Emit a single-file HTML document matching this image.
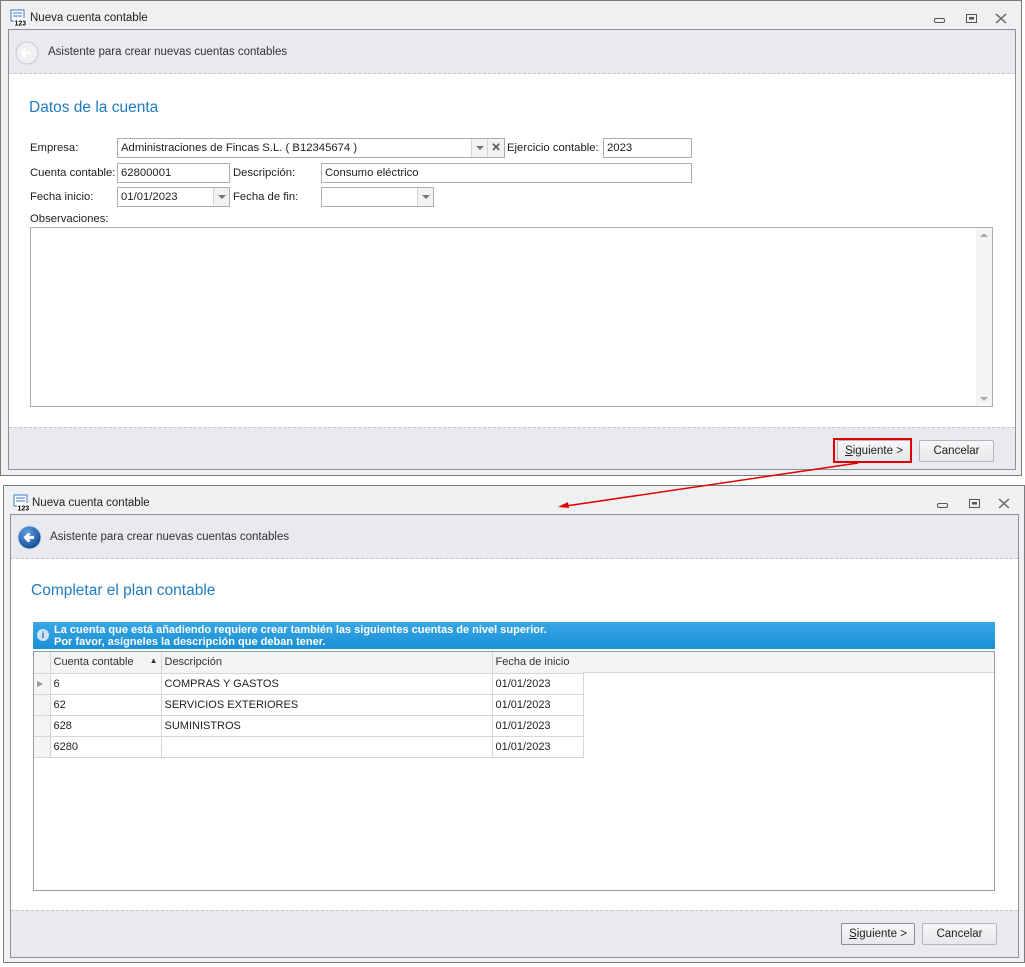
<!DOCTYPE html>
<html><head><meta charset="utf-8"><style>
*{margin:0;padding:0;box-sizing:border-box}
body{width:1025px;height:967px;background:#fff;font-family:"Liberation Sans",sans-serif;font-size:11.3px;color:#1e1e1e;position:relative;overflow:hidden}
.a{position:absolute}
.win{position:absolute;border:1px solid #7a7d80;background:#eef0f2}
.frame{position:absolute;border:1px solid #8d9094;background:#fff}
.hdr{position:absolute;left:0;right:0;top:0;height:44px;background:#e8eaee;border-bottom:1px dashed #c4c7cc}
.ftr{position:absolute;left:0;right:0;bottom:0;height:42px;background:#e8eaee;border-top:1px dashed #c4c7cc}
.inp{position:absolute;height:20px;border:1px solid #abadb3;background:#fff;padding:3px 3px;white-space:nowrap;overflow:hidden}
.dd{position:absolute;top:0;right:0;width:16px;height:18px;border-left:1px solid #d5d5d5;background:#f2f2f2}
.dd:after{content:"";position:absolute;left:4px;top:7px;border:4px solid transparent;border-top:4px solid #777;border-bottom:0}
.btn{position:absolute;height:22px;border:1px solid #b3b6ba;border-radius:2px;background:linear-gradient(#f6f7f8,#e5e7ea);text-align:center;line-height:20px;font-size:11.5px}
.t{position:absolute;white-space:nowrap}
table{border-collapse:collapse}
td{border:1px solid #d6d6d6;height:21px;padding:0 3px;font-size:11px}
</style></head><body>

<!-- Window 1 -->
<div class="win" style="left:0;top:0;width:1022px;height:476px">
 <svg class="a" style="left:9px;top:8px" width="17" height="17"><rect x="1" y="1" width="13" height="11" fill="#fff" stroke="#3b78c9"/><path d="M3 4h9M3 7h9" stroke="#3b78c9"/><rect x="4" y="9" width="13" height="8" fill="#fff"/><text x="4.5" y="16.5" font-size="7" font-family="Liberation Sans" font-weight="bold">123</text></svg>
 <div class="t" style="left:29px;top:11px;font-size:11.5px">Nueva cuenta contable</div>
 <svg class="a" style="left:932px;top:12px" width="80" height="12"><rect x="1.5" y="5.5" width="10" height="4" rx="1.5" fill="none" stroke="#555"/><rect x="33.5" y="1.5" width="10" height="8" fill="none" stroke="#555"/><rect x="36" y="4" width="5" height="2.5" fill="#555"/><path d="M63 1l10 9M73 1l-10 9" stroke="#666" stroke-width="1.5"/></svg>
 <div class="frame" style="left:7px;top:28px;width:1008px;height:441px">
  <div class="hdr">
   <svg class="a" style="left:6px;top:11px" width="24" height="24"><circle cx="12" cy="12" r="11" fill="#eef0f2" stroke="#c6c9cd"/><path d="M16 12H8M11 8l-4 4 4 4" stroke="#fff" stroke-width="3" fill="none"/></svg>
   <div class="t" style="left:39px;top:16px;font-size:11.5px;color:#333">Asistente para crear nuevas cuentas contables</div>
  </div>
  <div class="t" style="left:20px;top:69px;font-size:15.5px;color:#1f7cc1">Datos de la cuenta</div>
  <div class="t" style="left:21px;top:112px">Empresa:</div>
  <div class="inp" style="left:108px;top:108px;width:388px">Administraciones de Fincas S.L. ( B12345674 )<div class="dd" style="right:17px"></div><div class="a" style="right:0;top:0;width:17px;height:18px;background:#f2f2f2;border-left:1px solid #d5d5d5;text-align:center;font-weight:bold;color:#555;line-height:18px">✕</div></div>
  <div class="t" style="left:498px;top:112px">Ejercicio contable:</div>
  <div class="inp" style="left:594px;top:108px;width:89px">2023</div>
  <div class="t" style="left:21px;top:137px">Cuenta contable:</div>
  <div class="inp" style="left:108px;top:133px;width:113px">62800001</div>
  <div class="t" style="left:224px;top:137px">Descripción:</div>
  <div class="inp" style="left:312px;top:133px;width:371px">Consumo eléctrico</div>
  <div class="t" style="left:21px;top:161px">Fecha inicio:</div>
  <div class="inp" style="left:108px;top:157px;width:113px">01/01/2023<div class="dd"></div></div>
  <div class="t" style="left:224px;top:161px">Fecha de fin:</div>
  <div class="inp" style="left:312px;top:157px;width:113px"><div class="dd"></div></div>
  <div class="t" style="left:21px;top:183px">Observaciones:</div>
  <div class="inp" style="left:21px;top:197px;width:963px;height:180px"><div class="a" style="right:0;top:0;width:16px;height:178px;background:#f4f4f4"><div class="a" style="left:4px;top:5px;border:4px solid transparent;border-bottom:4px solid #aaa;border-top:0"></div><div class="a" style="left:4px;bottom:5px;border:4px solid transparent;border-top:4px solid #aaa;border-bottom:0"></div></div></div>
  <div class="ftr">
   <div class="btn" style="left:828px;top:12px;width:74px"><u>S</u>iguiente &gt;</div>
   <div class="btn" style="left:910px;top:12px;width:75px">Cancelar</div>
  </div>
 </div>
</div>
<div class="a" style="left:833px;top:438px;width:79px;height:25px;border:2px solid #e00000"></div>

<!-- Window 2 -->
<div class="win" style="left:3px;top:485px;width:1022px;height:478px">
 <svg class="a" style="left:9px;top:8px" width="17" height="17"><rect x="1" y="1" width="13" height="11" fill="#fff" stroke="#3b78c9"/><path d="M3 4h9M3 7h9" stroke="#3b78c9"/><rect x="4" y="9" width="13" height="8" fill="#fff"/><text x="4.5" y="16.5" font-size="7" font-family="Liberation Sans" font-weight="bold">123</text></svg>
 <div class="t" style="left:28px;top:11px;font-size:11.5px">Nueva cuenta contable</div>
 <svg class="a" style="left:932px;top:12px" width="80" height="12"><rect x="1.5" y="5.5" width="10" height="4" rx="1.5" fill="none" stroke="#555"/><rect x="33.5" y="1.5" width="10" height="8" fill="none" stroke="#555"/><rect x="36" y="4" width="5" height="2.5" fill="#555"/><path d="M63 1l10 9M73 1l-10 9" stroke="#666" stroke-width="1.5"/></svg>
 <div class="frame" style="left:6px;top:28px;width:1009px;height:444px">
  <div class="hdr">
   <svg class="a" style="left:6px;top:10px" width="25" height="25"><defs><radialGradient id="g" cx=".4" cy=".3" r=".8"><stop offset="0" stop-color="#5fa0e6"/><stop offset="1" stop-color="#0b3f8c"/></radialGradient></defs><circle cx="12.5" cy="12.5" r="11.5" fill="url(#g)" stroke="#c9d6e6"/><path d="M17 12.5H9M12.5 8.5l-4 4 4 4" stroke="#fff" stroke-width="3" fill="none"/></svg>
   <div class="t" style="left:39px;top:16px;font-size:11.5px;color:#333">Asistente para crear nuevas cuentas contables</div>
  </div>
  <div class="t" style="left:20px;top:67px;font-size:15.5px;color:#1f7cc1">Completar el plan contable</div>
  <div class="a" style="left:22px;top:107px;width:962px;height:27px;background:linear-gradient(#3aa7e6,#1890d6);color:#fff;font-weight:bold;font-size:11px;line-height:12px;padding:2px 0 0 21px">La cuenta que está añadiendo requiere crear también las siguientes cuentas de nivel superior.<br>Por favor, asígneles la descripción que deban tener.
   <div class="a" style="left:4px;top:7px;width:12px;height:12px;border-radius:6px;background:#cfe3f5;color:#1a66b0;font-size:9px;line-height:12px;text-align:center">i</div></div>
  <div class="a" style="left:22px;top:136px;width:962px;height:240px;border:1px solid #9a9da1;background:#fff">
   <table class="a" style="left:0;top:0">
    <tr style="background:#f3f4f6;color:#333"><td style="width:16px;border-left:0;border-top:0"></td><td style="width:111px;border-top:0">Cuenta contable <span style="float:right;font-size:8px">▲</span></td><td style="width:331px;border-top:0">Descripción</td><td style="width:91px;border-top:0">Fecha de inicio</td></tr>
    <tr><td style="background:#f3f4f6;border-left:0;color:#999;font-size:8px">▶</td><td>6</td><td>COMPRAS Y GASTOS</td><td>01/01/2023</td></tr>
    <tr><td style="background:#f3f4f6;border-left:0"></td><td>62</td><td>SERVICIOS EXTERIORES</td><td>01/01/2023</td></tr>
    <tr><td style="background:#f3f4f6;border-left:0"></td><td>628</td><td>SUMINISTROS</td><td>01/01/2023</td></tr>
    <tr><td style="background:#f3f4f6;border-left:0"></td><td>6280</td><td></td><td>01/01/2023</td></tr>
   </table>
   <div class="a" style="left:549px;top:0;right:0;height:21px;background:#f3f4f6;border-bottom:1px solid #d6d6d6"></div>
  </div>
  <div class="ftr" style="height:47px">
   <div class="btn" style="left:830px;top:12px;width:74px;border-color:#8a8d91"><u>S</u>iguiente &gt;</div>
   <div class="btn" style="left:911px;top:12px;width:75px">Cancelar</div>
  </div>
 </div>
</div>
<svg class="a" style="left:0;top:0" width="1025" height="967"><path d="M858 463L566 506" stroke="#e00000" stroke-width="1.5"/><path d="M558 507l10-5 1 6z" fill="#e00000"/></svg>
</body></html>
